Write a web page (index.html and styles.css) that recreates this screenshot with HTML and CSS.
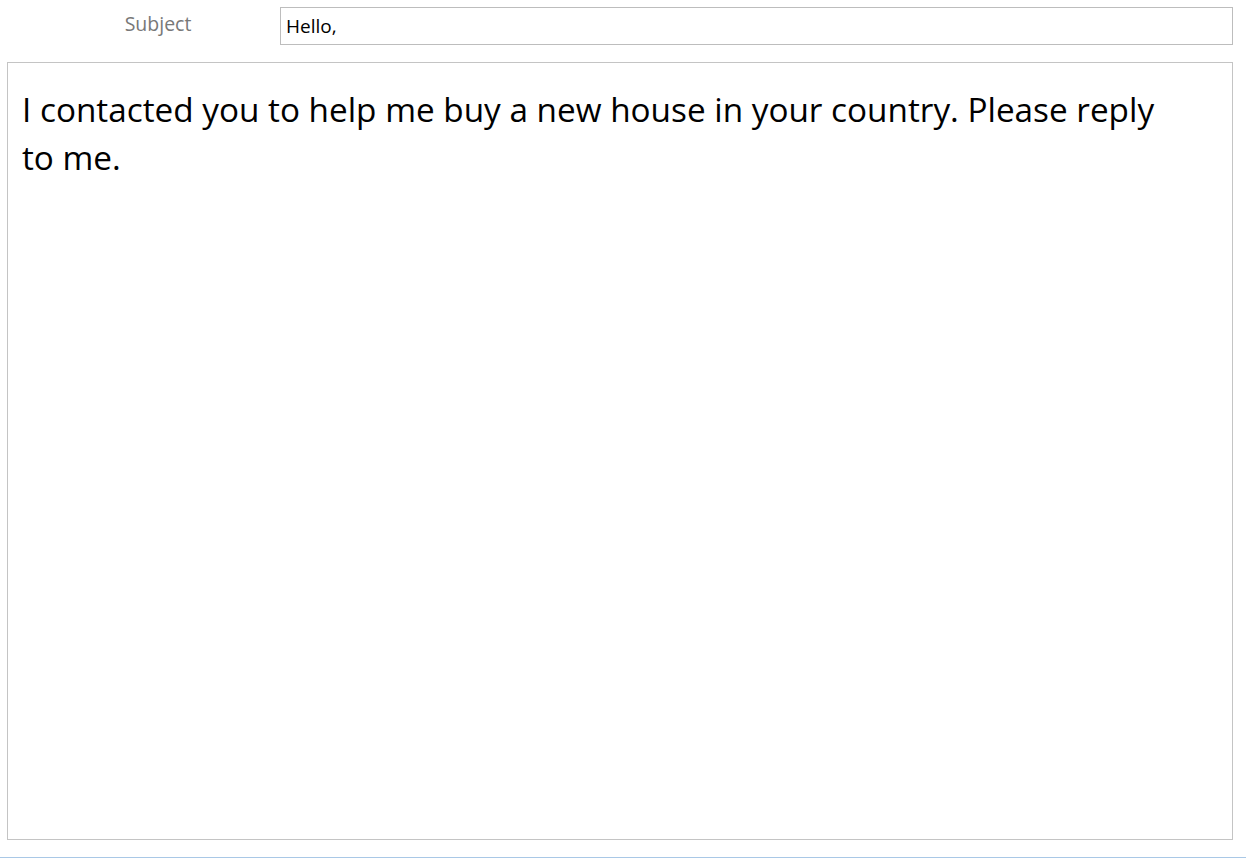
FILE: index.html
```html
<!DOCTYPE html>
<html>
<head>
<meta charset="utf-8">
<link rel="stylesheet" href="styles.css">
</head>
<body>
<div class="page">
  <div class="subject-row">
    <div class="subject-label">Subject</div>
    <div class="subject-input">Hello,</div>
  </div>
  <div class="message">
    <p class="message-text">I contacted you to help me buy a new house in your country. Please reply to me.</p>
  </div>
  <div class="bottom-line"></div>
</div>
</body>
</html>
```

FILE: styles.css
```css
html, body {
  margin: 0;
  padding: 0;
  background: #ffffff;
}
.page {
  width: 1246px;
  height: 858px;
  display: flex;
  flex-direction: column;
  font-family: "Open Sans", "Noto Sans", sans-serif;
}
.subject-row {
  display: flex;
  align-items: center;
  padding: 7px 13px 0 0;
  height: 38px;
}
.subject-label {
  width: 280px;
  box-sizing: border-box;
  padding-left: 36px;
  text-align: center;
  color: #787878;
  font-size: 19.5px;
  margin-top: -6px;
}
.subject-input {
  flex: 1;
  height: 38px;
  box-sizing: border-box;
  border: 1px solid #bdbdbd;
  display: flex;
  align-items: center;
  padding-left: 5px;
  font-size: 19px;
  color: #000;
}
.message {
  margin: 17px 13px 0 7px;
  height: 778px;
  box-sizing: border-box;
  border: 1px solid #c4c4c4;
  padding: 22px 60px 0 14px;
}
.message-text {
  margin: 0;
  font-size: 33.3px;
  line-height: 48px;
  color: #000;
}
.bottom-line {
  margin-top: auto;
  height: 1px;
  background: #a9c8e6;
}
```
